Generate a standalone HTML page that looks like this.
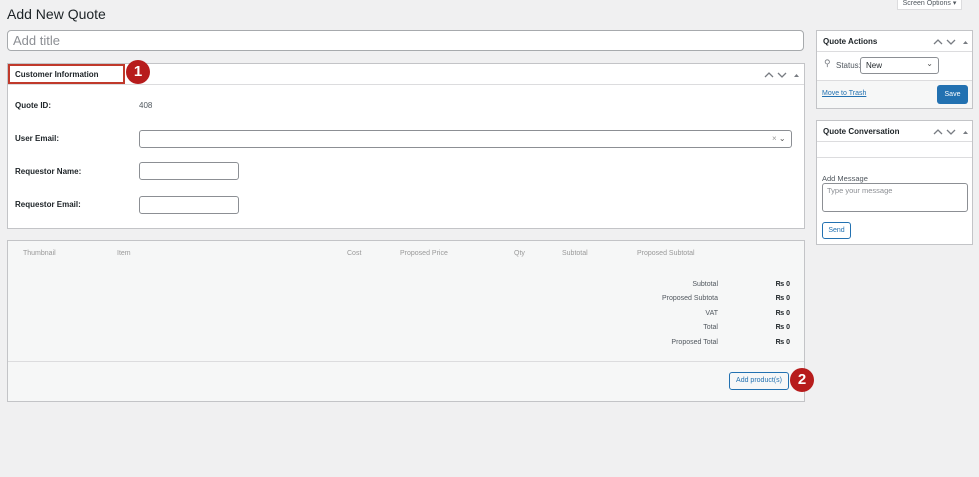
<!DOCTYPE html>
<html><head><style>
*{box-sizing:border-box;margin:0;padding:0}
body{width:979px;height:477px;background:#f0f0f1;font-family:"Liberation Sans",Arial,sans-serif;color:#1d2327;position:relative;overflow:hidden;font-size:8px}
.a{position:absolute}
.box{position:absolute;background:#fff;border:1px solid #c3c4c7}
.hd{position:absolute;left:0;right:0;top:0;border-bottom:1px solid #dcdcde}
.b{font-weight:bold;font-size:8px}
.inp{position:absolute;background:#fff;border:1px solid #8c8f94;border-radius:3px}
.circ{position:absolute;width:24px;height:24px;border-radius:50%;background:#b71c1c;color:#fff;font-weight:bold;font-size:15px;text-align:center;line-height:24px}
.g{color:#999;font-size:7px}
.tr{position:absolute;left:600px;width:110px;text-align:right;font-size:7px;color:#50575e}
.tv{position:absolute;left:750px;width:32px;text-align:right;font-size:7px;font-weight:bold}
</style></head><body>
<div class="a" style="left:897px;top:-2px;width:65px;height:12px;background:#fff;border:1px solid #dcdcde;font-size:7px;color:#50575e;text-align:center;line-height:9px">Screen Options ▾</div>
<div class="a" style="left:7px;top:6px;font-size:14px">Add New Quote</div>
<div class="inp" style="left:7px;top:30px;width:797px;height:21px;border-radius:4px;font-size:13px;color:#8c8f94;padding:2px 5px;border-color:#a7aaad">Add title</div>

<div class="box" style="left:7px;top:63px;width:798px;height:166px">
 <div class="hd" style="height:21px"></div>
 <div class="a" style="left:0;top:0;width:117px;height:20px;border:2px solid #c0392b"></div>
 <div class="a b" style="left:7px;top:6px">Customer Information</div>
 <svg class="a" style="left:755px;top:6px" width="40" height="10"><path d="M2 7l4-4 4 4M15 3l4 4 4-4" stroke="#787c82" stroke-width="1.3" fill="none"/><path d="M31 7l2.5-3 2.5 3z" fill="#787c82"/></svg>
 <div class="a b" style="left:7px;top:37px">Quote ID:</div>
 <div class="a" style="left:131px;top:37px;color:#50575e">408</div>
 <div class="a b" style="left:7px;top:70px">User Email:</div>
 <div class="inp" style="left:131px;top:66px;width:653px;height:18px"></div>
 <div class="a" style="left:764px;top:70px;font-size:8px;color:#999">× <span style="color:#555">⌄</span></div>
 <div class="a b" style="left:7px;top:103px">Requestor Name:</div>
 <div class="inp" style="left:131px;top:98px;width:100px;height:18px"></div>
 <div class="a b" style="left:7px;top:136px">Requestor Email:</div>
 <div class="inp" style="left:131px;top:132px;width:100px;height:18px"></div>
</div>
<div class="circ" style="left:126px;top:60px">1</div>

<div class="box" style="left:7px;top:240px;width:798px;height:162px;background:#f6f7f7">
 <div class="a g" style="left:15px;top:9px">Thumbnail</div>
 <div class="a g" style="left:109px;top:9px">Item</div>
 <div class="a g" style="left:339px;top:9px">Cost</div>
 <div class="a g" style="left:392px;top:9px">Proposed Price</div>
 <div class="a g" style="left:506px;top:9px">Qty</div>
 <div class="a g" style="left:554px;top:9px">Subtotal</div>
 <div class="a g" style="left:629px;top:9px">Proposed Subtotal</div>
 <div class="tr" style="top:40px">Subtotal</div>
 <div class="tr" style="top:54px">Proposed Subtota</div>
 <div class="tr" style="top:69px">VAT</div>
 <div class="tr" style="top:83px">Total</div>
 <div class="tr" style="top:98px">Proposed Total</div>
 <div class="tv" style="top:40px">₨ 0</div>
 <div class="tv" style="top:54px">₨ 0</div>
 <div class="tv" style="top:69px">₨ 0</div>
 <div class="tv" style="top:83px">₨ 0</div>
 <div class="tv" style="top:98px">₨ 0</div>
 <div class="a" style="left:0;right:0;top:120px;border-top:1px solid #dcdcde"></div>
 <div class="a" style="left:721px;top:131px;width:60px;height:18px;border:1px solid #2271b1;border-radius:3px;background:#f6f7f7;color:#2271b1;font-size:7px;text-align:center;line-height:16px">Add product(s)</div>
</div>
<div class="circ" style="left:790px;top:368px">2</div>

<div class="box" style="left:816px;top:30px;width:157px;height:79px">
 <div class="hd" style="height:21px"></div>
 <div class="a b" style="left:6px;top:6px">Quote Actions</div>
 <svg class="a" style="left:115px;top:6px" width="40" height="10"><path d="M2 7l4-4 4 4M15 3l4 4 4-4" stroke="#787c82" stroke-width="1.3" fill="none"/><path d="M31 7l2.5-3 2.5 3z" fill="#787c82"/></svg>
 <div class="a" style="left:7px;top:27px;font-size:9px;color:#787c82">⚲</div>
 <div class="a" style="left:19px;top:30px;color:#50575e">Status:</div>
 <div class="inp" style="left:43px;top:26px;width:79px;height:17px;padding:3px 5px;font-size:8px">New<span style="position:absolute;right:5px;top:1px;color:#555">⌄</span></div>
 <div class="a" style="left:0;right:0;top:49px;bottom:0;background:#f6f7f7;border-top:1px solid #dcdcde"></div>
 <div class="a" style="left:5px;top:59px;color:#2271b1;text-decoration:underline;font-size:7px">Move to Trash</div>
 <div class="a" style="left:120px;top:54px;width:31px;height:19px;background:#2271b1;border-radius:3px;color:#fff;font-size:7px;text-align:center;line-height:19px">Save</div>
</div>

<div class="box" style="left:816px;top:120px;width:157px;height:125px">
 <div class="hd" style="height:21px"></div>
 <div class="a b" style="left:6px;top:6px">Quote Conversation</div>
 <svg class="a" style="left:115px;top:6px" width="40" height="10"><path d="M2 7l4-4 4 4M15 3l4 4 4-4" stroke="#787c82" stroke-width="1.3" fill="none"/><path d="M31 7l2.5-3 2.5 3z" fill="#787c82"/></svg>
 <div class="a" style="left:0;right:0;top:36px;border-top:1px solid #dcdcde"></div>
 <div class="a" style="left:5px;top:53px;color:#50575e;font-size:7.5px">Add Message</div>
 <div class="inp" style="left:5px;top:62px;width:146px;height:29px;padding:2px 4px;color:#8c8f94;font-size:7.5px">Type your message</div>
 <div class="a" style="left:5px;top:101px;width:29px;height:17px;border:1px solid #2271b1;border-radius:3px;color:#2271b1;font-size:7px;text-align:center;line-height:15px">Send</div>
</div>
</body></html>
